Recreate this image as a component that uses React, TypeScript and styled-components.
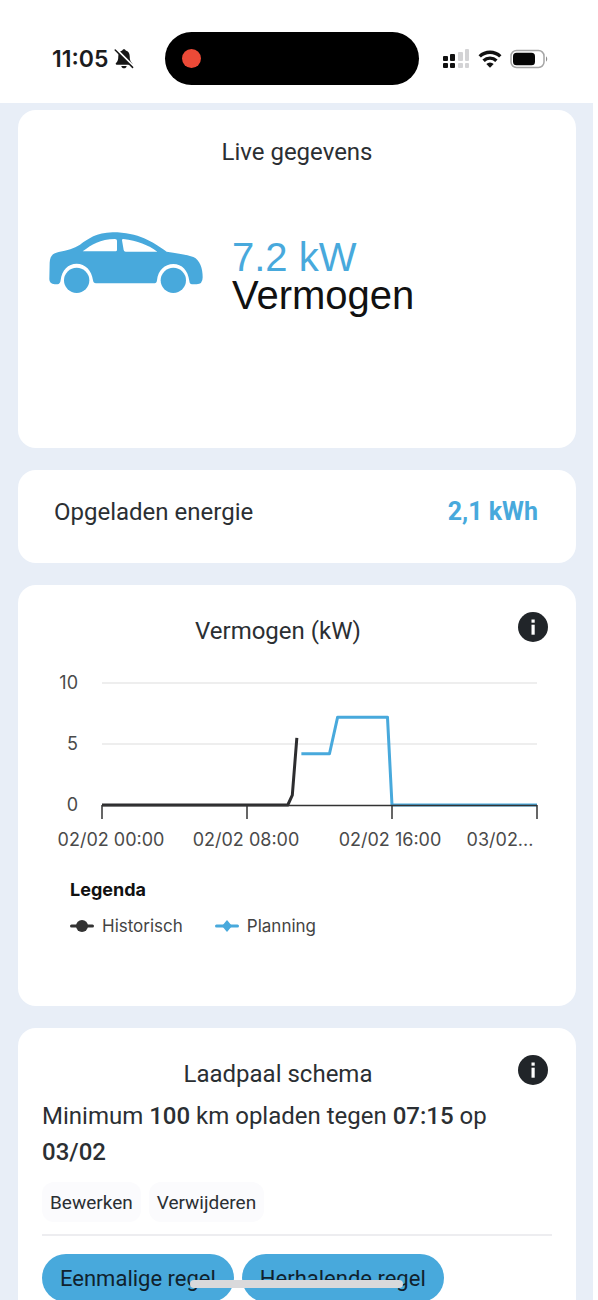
import React from 'react';
import styled, { createGlobalStyle } from 'styled-components';

type Point = [number, number];

// [uur van de dag, vermogen in kW]
const history: Point[] = [
  [0, 0],
  [10.25, 0],
  [10.5, 0.8],
  [10.75, 5.5],
];

const planning: Point[] = [
  [11, 4.2],
  [12.55, 4.2],
  [13, 7.2],
  [15.75, 7.2],
  [16, 0],
  [24, 0],
];

const xTicks = [
  { hour: 0, label: '02/02 00:00', at: 93 },
  { hour: 8, label: '02/02 08:00', at: 228 },
  { hour: 16, label: '02/02 16:00', at: 372 },
  { hour: 24, label: '03/02...', at: 482 },
];

const toX = (hour: number) => 84 + (hour / 24) * 435;
const toY = (kw: number) => 145 - kw * 12.2;
const toPoints = (points: Point[]) =>
  points.map(([hour, kw]) => `${toX(hour)},${toY(kw)}`).join(' ');

const BellOff = () => (
  <svg width="20" height="22" viewBox="0 0 20 22" aria-hidden="true">
    <path
      d="M10 1.2c.9 0 1.600.6 1.700 1.400 2.700.7 4 2.900 4 5.600 0 3.700.8 5.300 2.300 6.900.6.700.3 1.600-.7 1.600H2.700c-1 0-1.300-.9-.7-1.600 1.500-1.600 2.300-3.200 2.300-6.900 0-2.700 1.300-4.900 4-5.600.1-.8.8-1.400 1.700-1.400z"
      fill="#161616"
    />
    <path d="M7.300 18h5.400c-.3 1.500-1.300 2.300-2.700 2.300S7.600 19.500 7.300 18z" fill="#161616" />
    <path d="M3 2.200 19 18.200" stroke="#fff" strokeWidth="2.400" />
    <path d="M1.200 2 18.600 19.400" stroke="#161616" strokeWidth="1.500" strokeLinecap="round" />
  </svg>
);

const Signal = () => (
  <svg width="28" height="20" viewBox="0 0 28 20" aria-hidden="true">
    <g fill="#111">
      <rect x="1" y="7" width="5" height="5" rx="1" />
      <rect x="8" y="5" width="5" height="7" rx="1" />
      <rect x="1" y="14" width="5" height="5" rx="1" />
      <rect x="8" y="14" width="5" height="5" rx="1" />
    </g>
    <g fill="#d3d3d5">
      <rect x="16" y="3" width="5" height="9" rx="1" />
      <rect x="23" y="0" width="4" height="12" rx="1" />
      <rect x="16" y="14" width="5" height="5" rx="1" />
      <rect x="23" y="14" width="4" height="5" rx="1" />
    </g>
  </svg>
);

const Wifi = () => (
  <svg width="24" height="18" viewBox="0 0 24 18" aria-hidden="true">
    <g fill="none" stroke="#111" strokeWidth="3.400">
      <path d="M1.700 6.400a14.800 14.800 0 0 1 20.600 0" />
      <path d="M5.600 10.700a9.200 9.200 0 0 1 12.800 0" />
    </g>
    <path d="M12 17.800 8.300 14a5.300 5.300 0 0 1 7.400 0z" fill="#111" />
  </svg>
);

const Battery = () => (
  <svg width="38" height="20" viewBox="0 0 38 20" aria-hidden="true">
    <rect x="1" y="1.500" width="33" height="17" rx="5.500" fill="none" stroke="#a5a5a5" strokeWidth="1.500" />
    <rect x="3" y="3.800" width="22" height="12.400" rx="3.500" fill="#050505" />
    <path d="M36 7.500c1.600.6 1.600 4.400 0 5z" fill="#8c8c8c" />
  </svg>
);

const Car = () => (
  <svg width="154" height="62" viewBox="147 96 462 186" aria-hidden="true">
    <path
      fill="#48a9dc"
      fillRule="evenodd"
      d="M148 238 149 188C150 168 158 160 176 156C202 151 222 145 240 134C266 116 288 98 338 97C416 97 458 126 500 155C532 160 556 163 580 171C600 180 608 205 608 232Q608 253 590 253H576Q569 253 568 243C564 211 546 192 520 192C494 192 474 211 471 241Q470 250 464 250H288Q280 250 279 241C275 211 256 191 230 191C204 191 186 210 182 240Q181 252 172 253H164Q148 252 148 238ZM248 154H347Q351 154 351 149V122Q351 117 345 117C300 117 275 134 248 154ZM366 121 371 150Q372 155 377 155H472C445 135 412 122 370 117Q365 117 366 121Z"
    />
    <circle cx="230" cy="241" r="38" fill="#48a9dc" />
    <circle cx="520" cy="241" r="38" fill="#48a9dc" />
  </svg>
);

const InfoIcon = () => (
  <svg width="30" height="30" viewBox="0 0 30 30" aria-hidden="true">
    <circle cx="15" cy="15" r="15" fill="#212529" />
    <rect x="13.500" y="7.500" width="3.200" height="3.200" fill="#fff" />
    <rect x="13.500" y="12.700" width="3.200" height="10" fill="#fff" />
  </svg>
);

const PowerChart = () => (
  <Chart viewBox="0 0 558 200" role="img" aria-label="Vermogen (kW)">
    {[10, 5].map((kw) => (
      <line key={kw} x1="84" x2="519" y1={toY(kw)} y2={toY(kw)} stroke="#e9e9e9" strokeWidth="1.500" />
    ))}
    {[10, 5, 0].map((kw) => (
      <text key={kw} x="60" y={toY(kw) + 6} textAnchor="end">
        {kw}
      </text>
    ))}
    <polyline points={toPoints(planning)} stroke="#48a9dc" />
    <polyline points={toPoints(history)} stroke="#2d2d2f" />
    <path d="M84 145.500H519" stroke="#333" strokeWidth="1.500" />
    {xTicks.map(({ hour, label, at }) => (
      <React.Fragment key={hour}>
        <line x1={toX(hour)} x2={toX(hour)} y1="145" y2="159" stroke="#333" strokeWidth="1.500" />
        <text x={at} y="186" textAnchor="middle">
          {label}
        </text>
      </React.Fragment>
    ))}
  </Chart>
);

const App = () => {
  return (
    <Screen>
      <GlobalStyle />
      <StatusBar>
        <Clock>
          11:05
          <BellOff />
        </Clock>
        <Island>
          <RecordDot />
        </Island>
        <StatusIcons>
          <Signal />
          <Wifi />
          <Battery />
        </StatusIcons>
      </StatusBar>

      <Content>
        <Card $height={338}>
          <CardTitle>Live gegevens</CardTitle>
          <LiveRow>
            <Car />
            <LiveText>
              <LiveValue>7.2 kW</LiveValue>
              <div>Vermogen</div>
            </LiveText>
          </LiveRow>
        </Card>

        <Card $height={93}>
          <EnergyRow>
            <span>Opgeladen energie</span>
            <strong>2,1 kWh</strong>
          </EnergyRow>
        </Card>

        <Card $height={421}>
          <CardHeader>
            <CardTitle>Vermogen (kW)</CardTitle>
            <InfoButton aria-label="Info over vermogen">
              <InfoIcon />
            </InfoButton>
          </CardHeader>
          <PowerChart />
          <Legend>
            <h3>Legenda</h3>
            <ul>
              <li>
                <svg width="24" height="14" viewBox="0 0 24 14" aria-hidden="true">
                  <path d="M1.500 7h21" stroke="#333" strokeWidth="3" strokeLinecap="round" />
                  <circle cx="12" cy="7" r="6" fill="#333" />
                </svg>
                Historisch
              </li>
              <li>
                <svg width="24" height="14" viewBox="0 0 24 14" aria-hidden="true">
                  <path d="M1.500 7h21" stroke="#48a9dc" strokeWidth="3" strokeLinecap="round" />
                  <path d="M12 1l5 6-5 6-5-6z" fill="#48a9dc" />
                </svg>
                Planning
              </li>
            </ul>
          </Legend>
        </Card>

        <Card $height={320}>
          <CardHeader>
            <CardTitle>Laadpaal schema</CardTitle>
            <InfoButton aria-label="Info over laadpaal schema">
              <InfoIcon />
            </InfoButton>
          </CardHeader>
          <Schedule>
            <p>
              Minimum <b>100</b> km opladen tegen <b>07:15</b> op <b>03/02</b>
            </p>
            <Actions>
              <TextButton>Bewerken</TextButton>
              <TextButton>Verwijderen</TextButton>
            </Actions>
            <Divider />
            <Actions>
              <PillButton>Eenmalige regel</PillButton>
              <PillButton>Herhalende regel</PillButton>
            </Actions>
          </Schedule>
        </Card>
      </Content>
      <HomeIndicator />
    </Screen>
  );
};

export default App;

const GlobalStyle = createGlobalStyle`
  * {
    box-sizing: border-box;
  }
  body {
    margin: 0;
    background: #fff;
    font-family: Roboto, 'Liberation Sans', sans-serif;
    color: #2b2f33;
  }
  button {
    border: none;
    font-family: inherit;
    cursor: pointer;
  }
  svg {
    display: block;
    flex-shrink: 0;
  }
`;

const Screen = styled.div`
  display: flex;
  flex-direction: column;
  height: 100vh;
  padding-right: 5px;
  overflow: hidden;
`;

const StatusBar = styled.header`
  display: grid;
  grid-template-columns: 1fr 254px 1fr;
  align-items: center;
  flex-shrink: 0;
  height: 103px;
  padding: 14px 10px 0 0;
`;

const Clock = styled.div`
  display: flex;
  align-items: center;
  gap: 6px;
  padding-left: 52px;
  font-family: Inter, sans-serif;
  font-size: 23px;
  font-weight: 600;
  color: #1c1c1e;
`;

const Island = styled.div`
  display: flex;
  align-items: center;
  height: 53px;
  padding-left: 17px;
  border-radius: 27px;
  background: #000;
`;

const RecordDot = styled.div`
  width: 19px;
  height: 19px;
  border-radius: 50%;
  background: #ec4a37;
`;

const StatusIcons = styled.div`
  display: flex;
  align-items: center;
  gap: 8px;
  padding-left: 23px;
`;

const Content = styled.main`
  display: flex;
  flex-direction: column;
  flex: 1;
  gap: 22px;
  min-height: 0;
  padding: 7px 17px 0 18px;
  background: #e8eef7;
  overflow: hidden;
`;

const Card = styled.section<{ $height: number }>`
  flex-shrink: 0;
  min-height: ${({ $height }) => $height}px;
  border-radius: 18px;
  background: #fff;
`;

const CardHeader = styled.div`
  position: relative;
  padding: 4px 38px 0 0;
`;

const CardTitle = styled.h2`
  margin: 0;
  padding-top: 26px;
  font-size: 24px;
  line-height: 32px;
  font-weight: 400;
  text-align: center;
`;

const InfoButton = styled.button`
  position: absolute;
  top: 27px;
  right: 28px;
  padding: 0;
  border-radius: 50%;
  background: none;
`;

const LiveRow = styled.div`
  display: flex;
  gap: 29px;
  padding: 64px 31px 0;
`;

const LiveText = styled.div`
  padding-top: 6px;
  font-family: 'Liberation Sans', Arial, sans-serif;
  font-size: 40px;
  line-height: 38px;
  color: #111;
`;

const LiveValue = styled.div`
  color: #48a9dc;
`;

const EnergyRow = styled.div`
  display: flex;
  justify-content: space-between;
  padding: 26px 38px 0 36px;
  font-size: 24px;
  line-height: 32px;
  strong {
    font-size: 25px;
    font-weight: 700;
    color: #48a9dc;
  }
`;

const Chart = styled.svg`
  width: 100%;
  margin: 13px 0 18px;
  text {
    fill: #4a4a4a;
    font-family: Inter, sans-serif;
    font-size: 18px;
  }
  polyline {
    fill: none;
    stroke-width: 3;
    stroke-linejoin: round;
  }
`;

const Legend = styled.div`
  padding-left: 52px;
  font-family: Inter, sans-serif;
  font-size: 17px;
  line-height: 24px;
  color: #444;
  h3 {
    margin: 0 0 12px;
    font-size: 18px;
    font-weight: 700;
    color: #111;
  }
  ul {
    display: flex;
    gap: 32px;
    margin: 0;
    padding: 0;
    list-style: none;
  }
  li {
    display: flex;
    align-items: center;
    gap: 8px;
  }
`;

const Schedule = styled.div`
  padding: 8px 24px 0;
  p {
    margin: 0 0 12px;
    font-size: 24px;
    line-height: 36px;
  }
  b {
    font-weight: 500;
  }
`;

const Actions = styled.div`
  display: flex;
  gap: 8px;
`;

const TextButton = styled.button`
  height: 40px;
  padding: 0 8px;
  border-radius: 12px;
  background: #fbfbfd;
  font-size: 19px;
  color: #2b2f33;
`;

const Divider = styled.hr`
  height: 2px;
  margin: 12px 0 18px;
  border: none;
  background: #ededf0;
`;

const PillButton = styled.button`
  height: 48px;
  padding: 0 18px;
  border-radius: 24px;
  background: #48a9dc;
  font-size: 22px;
  color: #10222e;
`;

const HomeIndicator = styled.div`
  position: fixed;
  right: 5px;
  bottom: 12px;
  left: 0;
  width: 213px;
  height: 8px;
  margin: 0 auto;
  border-radius: 4px;
  background: #d9d9db;
`;
